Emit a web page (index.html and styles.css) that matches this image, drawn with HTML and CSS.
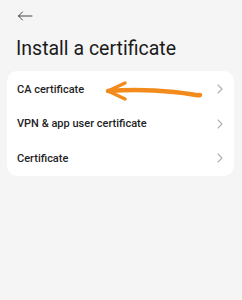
FILE: index.html
```html
<!DOCTYPE html>
<html>
<head>
<meta charset="utf-8">
<link rel="stylesheet" href="styles.css">
</head>
<body>
<div class="page">
  <div class="topbar">
    <svg class="back" width="16" height="10" viewBox="0 0 16 10"><path d="M15 5H1.5M5.5 1L1.5 5l4 4" fill="none" stroke="#444" stroke-width="1" stroke-linecap="round" stroke-linejoin="round"/></svg>
  </div>
  <h1 class="title">Install a certificate</h1>
  <div class="card">
    <div class="row"><span class="label">CA certificate</span><svg class="chev" width="6" height="10" viewBox="0 0 6 10"><path d="M1 1l4 4-4 4" fill="none" stroke="#b0b0b0" stroke-width="1.1" stroke-linecap="round" stroke-linejoin="round"/></svg></div>
    <div class="row"><span class="label">VPN &amp; app user certificate</span><svg class="chev" width="6" height="10" viewBox="0 0 6 10"><path d="M1 1l4 4-4 4" fill="none" stroke="#b0b0b0" stroke-width="1.1" stroke-linecap="round" stroke-linejoin="round"/></svg></div>
    <div class="row"><span class="label">Certificate</span><svg class="chev" width="6" height="10" viewBox="0 0 6 10"><path d="M1 1l4 4-4 4" fill="none" stroke="#b0b0b0" stroke-width="1.1" stroke-linecap="round" stroke-linejoin="round"/></svg></div>
    <svg class="annot" width="100" height="24" viewBox="0 0 100 24"><path d="M4 12 C 30 10, 50 11, 70 13 S 92 17, 96 16" fill="none" stroke="#f28a1c" stroke-width="4.5" stroke-linecap="round"/><path d="M21 4 L4 12 L21 20" fill="none" stroke="#f28a1c" stroke-width="3.5" stroke-linecap="round" stroke-linejoin="round"/></svg>
  </div>
</div>
</body>
</html>
```
FILE: styles.css
```css
html, body {
  margin: 0;
  padding: 0;
  background: #f5f5f5;
}
.page {
  width: 242px;
  height: 300px;
  font-family: Roboto, "Noto Sans", sans-serif;
  color: #1b1b1b;
}
.topbar {
  height: 32px;
  display: flex;
  align-items: center;
  padding-left: 17px;
}
.back {
  display: block;
}
.title {
  margin: 0;
  padding: 4px 0 0 16px;
  font-size: 19.5px;
  font-weight: 400;
  line-height: 26px;
  height: 35px;
  letter-spacing: 0;
}
.card {
  position: relative;
  margin: 0 8px 0 7px;
  background: #fff;
  border-radius: 10px;
  padding-top: 1px;
}
.row {
  height: 34.5px;
  display: flex;
  align-items: center;
  justify-content: space-between;
  padding: 0 11px 0 10px;
}
.label {
  font-size: 11px;
  font-weight: 500;
  color: #1f1f1f;
}
.chev {
  display: block;
}
.annot {
  position: absolute;
  left: 97px;
  top: 8px;
}
```
